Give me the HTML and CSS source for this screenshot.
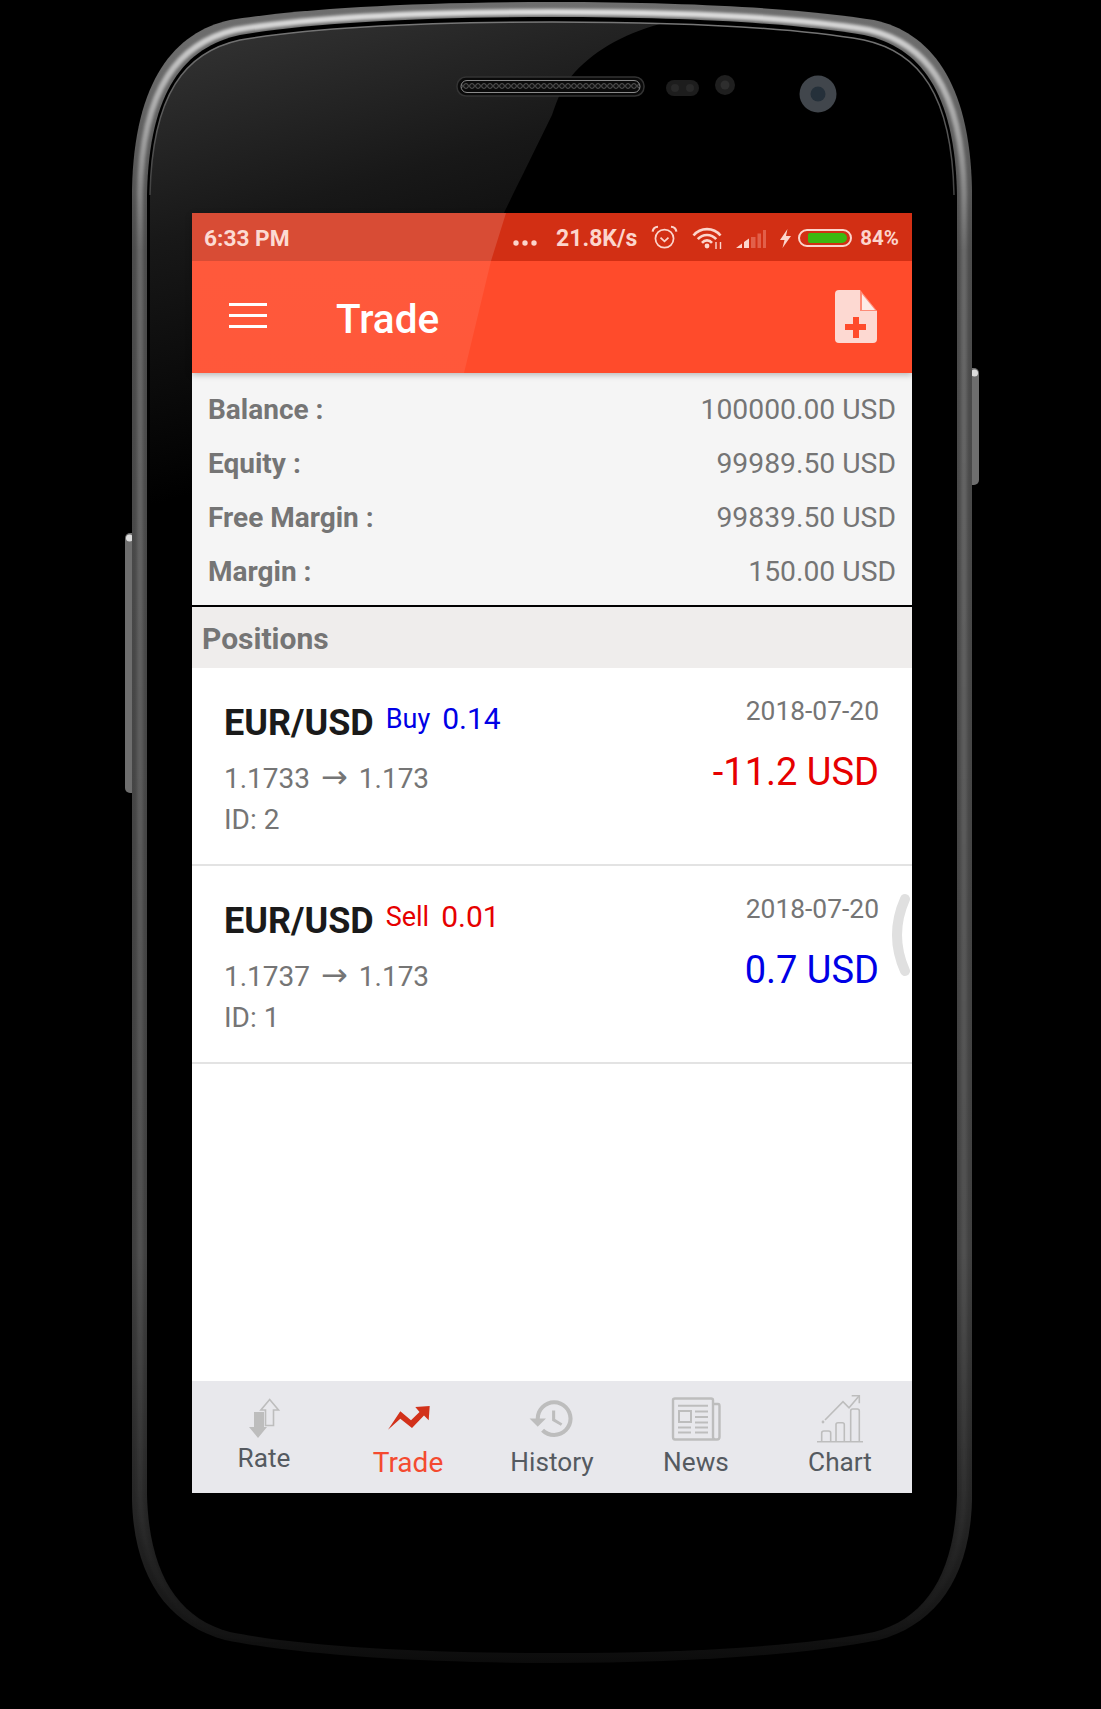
FILE: index.html
```html
<!DOCTYPE html>
<html lang="en">
<head>
  <meta charset="UTF-8" />
  <meta name="viewport" content="width=device-width, initial-scale=1.0"/>
  <title>Trade</title>
  <link rel="stylesheet" href="styles.css">
</head>
<body>
  <div class="phone">
    <!-- phone body, everything here sits behind the screen -->
    <svg class="frame" width="1101" height="1709" viewBox="0 0 1101 1709">
      <defs>
        <linearGradient id="band" gradientUnits="userSpaceOnUse" x1="0" y1="0" x2="0" y2="1670">
          <stop offset="0" stop-color="#6e6e6e"/>
          <stop offset="0.04" stop-color="#6a6a6a"/>
          <stop offset="0.15" stop-color="#4c4c4c"/>
          <stop offset="0.75" stop-color="#404040"/>
          <stop offset="0.91" stop-color="#242424"/>
          <stop offset="0.97" stop-color="#161616"/>
          <stop offset="1" stop-color="#0a0a0a"/>
        </linearGradient>
        <linearGradient id="sheen" gradientUnits="userSpaceOnUse" x1="0" y1="5" x2="0" y2="1650">
          <stop offset="0" stop-color="#fff" stop-opacity="0.8"/>
          <stop offset="0.04" stop-color="#fff" stop-opacity="0.55"/>
          <stop offset="0.15" stop-color="#fff" stop-opacity="0.16"/>
          <stop offset="0.8" stop-color="#fff" stop-opacity="0.08"/>
          <stop offset="1" stop-color="#fff" stop-opacity="0"/>
        </linearGradient>
        <linearGradient id="shine" gradientUnits="userSpaceOnUse" x1="200" y1="20" x2="330" y2="480">
          <stop offset="0" stop-color="#343434"/>
          <stop offset="0.42" stop-color="#181818"/>
          <stop offset="0.95" stop-color="#000"/>
        </linearGradient>
        <linearGradient id="lip" gradientUnits="userSpaceOnUse" x1="0" y1="20" x2="0" y2="300">
          <stop offset="0" stop-color="#777"/>
          <stop offset="1" stop-color="#222"/>
        </linearGradient>
        <pattern id="holes" patternUnits="userSpaceOnUse" x="463" y="81" width="6" height="11">
          <circle cx="3" cy="5" r="2.4" fill="#111" stroke="#6a6a6a" stroke-width="0.8"/>
        </pattern>
        <clipPath id="glass">
          <path d="M552 22 C420 22 310 28 240 40 C185 52 152 94 150 195 L150 1490 C153 1565 183 1609 232 1624 C305 1639 425 1647 552 1647 C679 1647 799 1639 872 1624 C921 1609 951 1565 954 1490 L954 195 C952 94 919 52 864 40 C794 28 684 22 552 22 Z"/>
        </clipPath>
        <filter id="soft" x="-5%" y="-5%" width="110%" height="110%">
          <feGaussianBlur stdDeviation="1.6"/>
        </filter>
      </defs>
      <rect x="125" y="533" width="12" height="260" rx="5" fill="#6e6e6e"/>
      <rect x="967" y="368" width="12" height="117" rx="5" fill="#6e6e6e"/>
      <circle cx="129.5" cy="538" r="3.5" fill="#ddd"/>
      <circle cx="974.5" cy="373" r="3.5" fill="#ddd"/>
      <path fill="url(#band)" d="M552 2 C400 2 290 10 230 20 C175 32 134 80 132 190 L132 1500 C134 1580 170 1625 225 1640 C300 1655 420 1663 552 1663 C684 1663 804 1655 879 1640 C934 1625 970 1580 972 1500 L972 190 C970 80 929 32 874 20 C814 10 704 2 552 2 Z"/>
      <path fill="none" stroke="url(#sheen)" stroke-width="6" filter="url(#soft)" d="M552 12 C410 12 300 19 235 30 C180 43 142 86 140 193 L140 1495 C142 1572 175 1620 228 1635 C302 1650 422 1658 552 1658 C682 1658 802 1650 876 1635 C929 1620 962 1572 964 1495 L964 193 C962 86 924 43 869 30 C804 19 694 12 552 12 Z"/>
      <path fill="#000" d="M552 17 C420 17 310 23 240 35 C185 47 149 90 147 195 L147 1495 C149 1572 177 1618 230 1632 C305 1647 425 1653 552 1653 C679 1653 799 1647 874 1632 C927 1618 955 1572 957 1495 L957 195 C955 90 919 47 864 35 C794 23 684 17 552 17 Z"/>
      <g clip-path="url(#glass)">
        <path fill="url(#shine)" d="M100 0 L690 18 C640 25 600 45 575 72 C562 86 558 98 552 115 C535 150 515 190 504 213 L192 213 L192 520 L100 520 Z"/>
      </g>
      <path fill="none" stroke="url(#lip)" stroke-width="1.5" d="M150 195 C152 94 185 52 240 40 C310 28 420 22 552 22 C684 22 794 28 864 40 C919 52 952 94 954 195"/>
      <rect x="457" y="77" width="187" height="19" rx="9" fill="#0a0a0a" stroke="#333" stroke-width="1.5"/>
      <rect x="461" y="80.5" width="179" height="12" rx="6" fill="url(#holes)" stroke="#8a8a8a" stroke-width="1"/>
      <rect x="666" y="80" width="33" height="16" rx="8" fill="#1d1d1d"/>
      <circle cx="675" cy="88" r="4" fill="#292929"/>
      <circle cx="690" cy="88" r="4" fill="#292929"/>
      <circle cx="725" cy="85" r="10" fill="#1f1f1f"/>
      <circle cx="725" cy="85" r="4.5" fill="#2e2e2e"/>
      <circle cx="818" cy="94" r="18.5" fill="#41464c"/>
      <circle cx="818" cy="94" r="7.5" fill="#25303a"/>
    </svg>

    <div class="screen">
      <div class="top">
        <div class="status">
          <span class="clock">6:33 PM</span>
          <div class="status-right">
            <svg class="st-dots" width="24" height="6" viewBox="0 0 24 6"><circle cx="3" cy="3" r="2.7"/><circle cx="12" cy="3" r="2.7"/><circle cx="21" cy="3" r="2.7"/></svg>
            <span class="speed">21.8K/s</span>
            <svg class="st-alarm" width="27" height="24" viewBox="0 0 25 22" fill="none" stroke="#fcd5cc" stroke-width="1.6">
              <circle cx="12.5" cy="12.5" r="8.4"/>
              <path d="M8.8 11.5 L12.5 15 L16.2 11.5"/>
              <path d="M1.5 6 C2 3 4 1.6 6.5 1.5 M23.5 6 C23 3 21 1.6 18.5 1.5" stroke-width="2"/>
            </svg>
            <svg class="st-wifi" width="31" height="22" viewBox="0 0 31 22" fill="none" stroke="#fcd5cc" stroke-width="2.6">
              <path d="M1.5 8.5 C8.5 0 21.5 0 28.5 8.5"/>
              <path d="M5.8 12.2 C10.5 6.5 19.5 6.5 24.2 12.2"/>
              <path d="M10 15.8 C12.8 12.6 17.2 12.6 20 15.8"/>
              <circle cx="15" cy="19" r="2.4" fill="#fcd5cc" stroke="none"/>
              <path d="M24 22 V15 M28.5 22 V15" stroke-width="1.4"/>
            </svg>
            <svg class="st-signal" width="30" height="19" viewBox="0 0 30 19">
              <path fill="#fcd5cc" d="M0 19 L6 14.5 V19 Z M8 13 L13 9.5 V19 H8 Z"/>
              <path fill="#e2604a" d="M15 8 H19.5 V19 H15 Z M21.5 4.5 H25 V19 H21.5 Z M27 1 H30 V19 H27 Z"/>
            </svg>
            <svg class="st-bolt" width="13" height="19" viewBox="0 0 13 19"><path fill="#fcd5cc" d="M8.5 0 L1 11 H5.5 L3.5 19 L12 7 H7 Z"/></svg>
            <div class="battery"><div class="battery-fill"></div></div>
            <span class="percent">84%</span>
          </div>
        </div>
        <div class="appbar">
          <div class="burger"><span></span><span></span><span></span></div>
          <div class="appbar-title">Trade</div>
          <svg class="file-add" width="42" height="53" viewBox="0 0 42 53">
            <path fill="#fdd9d2" d="M4 0 H25 L42 21 V49 Q42 53 38 53 H4 Q0 53 0 49 V4 Q0 0 4 0 Z"/>
            <path fill="#ff4b2b" d="M25 0 L42 21 H25 Z" opacity="0.55"/>
            <path fill="#fdece8" d="M27 4 L40 20 H27 Z"/>
            <path fill="#ff4b2b" d="M18 27 H24 V34 H31 V40 H24 V48 H18 V40 H10 V34 H18 Z"/>
          </svg>
        </div>
      </div>

      <div class="account">
        <div class="account-row"><span class="account-label">Balance :</span><span>100000.00 USD</span></div>
        <div class="account-row"><span class="account-label">Equity :</span><span>99989.50 USD</span></div>
        <div class="account-row"><span class="account-label">Free Margin :</span><span>99839.50 USD</span></div>
        <div class="account-row"><span class="account-label">Margin :</span><span>150.00 USD</span></div>
      </div>

      <div class="section-head">Positions</div>

      <div class="positions">
        <div class="position">
          <div class="pos-left">
            <div class="pos-title">
              <span class="pair">EUR/USD</span>
              <span class="side blue">Buy</span>
              <span class="lots blue">0.14</span>
            </div>
            <div class="pos-price">1.1733 <span class="arrow">→</span> 1.173</div>
            <div class="pos-id">ID: 2</div>
          </div>
          <div class="pos-right">
            <div class="pos-date">2018-07-20</div>
            <div class="pos-profit red">-11.2 USD</div>
          </div>
        </div>
        <div class="position">
          <div class="pos-left">
            <div class="pos-title">
              <span class="pair">EUR/USD</span>
              <span class="side red">Sell</span>
              <span class="lots red">0.01</span>
            </div>
            <div class="pos-price">1.1737 <span class="arrow">→</span> 1.173</div>
            <div class="pos-id">ID: 1</div>
          </div>
          <div class="pos-right">
            <div class="pos-date">2018-07-20</div>
            <div class="pos-profit blue">0.7 USD</div>
          </div>
        </div>
        <svg class="edge-handle" width="24" height="84" viewBox="0 0 24 84">
          <path d="M18 6 Q2 42 18 78" fill="none" stroke="#e0e0e0" stroke-width="10" stroke-linecap="round"/>
        </svg>
      </div>

      <div class="tabs">
        <div class="tab tab-short">
          <svg class="tab-icon" width="60" height="45" viewBox="0 0 60 45">
            <path fill="#bdbdbd" d="M20 18 H30 V33 H33 L24 44 L15 33 H20 Z"/>
            <path fill="none" stroke="#bdbdbd" stroke-width="1.6" d="M35.7 5.5 L44.5 16 H39.5 V31.5 H31.5 V16 H26.9 Z"/>
          </svg>
          <div class="tab-label">Rate</div>
        </div>
        <div class="tab tab-on">
          <svg class="tab-icon" width="60" height="50" viewBox="0 0 60 50">
            <path fill="#d2311a" transform="translate(10 12)" d="M0 23.7 L12.3 5.3 L23 14.3 L31.5 6 L27.3 1 L41.7 0 L40.7 14.3 L36 9.5 L24 22 L12.3 12.7 Z"/>
          </svg>
          <div class="tab-label">Trade</div>
        </div>
        <div class="tab">
          <svg class="tab-icon" width="60" height="50" viewBox="0 0 60 50">
            <path fill="#bdbdbd" transform="translate(5.5 0) scale(2.05)" d="M13 3c-4.97 0-9 4.03-9 9H1l3.89 3.89.07.14L9 12H6c0-3.87 3.13-7 7-7s7 3.13 7 7-3.13 7-7 7c-1.93 0-3.68-.79-4.94-2.06l-1.42 1.42C8.27 19.99 10.51 21 13 21c4.97 0 9-4.03 9-9s-4.03-9-9-9zm-1 5v5l4.28 2.54.72-1.21-3.5-2.08V8H12z"/>
          </svg>
          <div class="tab-label">History</div>
        </div>
        <div class="tab">
          <svg class="tab-icon" width="60" height="50" viewBox="0 0 60 50" fill="none" stroke="#bdbdbd">
            <path stroke-width="2.4" d="M47 10 H52 Q53.5 10 53.5 12 V43 Q53.5 45.5 51 45.5 H9 Q7 45.5 7 43 V6 Q7 4.5 9 4.5 H45 Q47 4.5 47 6 V43 Q47 45.5 49.5 45.5"/>
            <path stroke-width="2" d="M12 11.7 H42 M29 17.5 H42 M29 23 H42 M29 28.5 H42 M12 33.6 H25 M29 33.6 H42 M12 38.6 H25 M29 38.6 H42"/>
            <rect x="13" y="17" width="12" height="11" stroke-width="2"/>
          </svg>
          <div class="tab-label">News</div>
        </div>
        <div class="tab">
          <svg class="tab-icon" width="60" height="50" viewBox="0 0 60 50" fill="none" stroke="#bdbdbd" stroke-width="1.6">
            <path d="M7 47.8 H53"/>
            <path d="M11.7 47.8 V39 Q11.7 37 14 37 H18.5 Q20.7 37 20.7 39 V47.8"/>
            <path d="M26 47.8 V30.5 Q26 28.7 28 28.7 H32.3 Q34.3 28.7 34.3 30.5 V47.8"/>
            <path d="M40.7 47.8 V17 Q40.7 15 42.7 15 H47.3 Q49.3 15 49.3 17 V47.8"/>
            <path d="M15 26 L33 7.7 L39 13.7 L49 2"/>
            <path d="M41.7 1.7 H49.3 V9.3"/>
            <circle cx="13" cy="28" r="0.6"/>
          </svg>
          <div class="tab-label">Chart</div>
        </div>
      </div>
    </div>
  </div>
</body>
</html>
```

FILE: styles.css
```css
body {
  margin: 0;
  background: #000;
  font-family: Roboto, "Liberation Sans", sans-serif;
}
.phone {
  position: relative;
  width: 1101px;
  height: 1709px;
  padding: 213px 0 0 192px;
  box-sizing: border-box;
  overflow: hidden;
}
.frame {
  position: absolute;
  top: 0;
  left: 0;
}
.screen {
  position: relative;
  width: 720px;
  height: 1280px;
  display: flex;
  flex-direction: column;
  background: #fff;
}

/* status + app bar, the glass reflection lies over both */
.top {
  position: relative;
  z-index: 1;
  box-shadow: 0 2px 6px rgba(0,0,0,0.25);
}
.top::after {
  content: "";
  position: absolute;
  top: 0;
  left: 0;
  width: 100%;
  height: 100%;
  background: linear-gradient(180deg, rgba(255,255,255,0.14) 30%, rgba(255,255,255,0.08) 30%, rgba(255,255,255,0.07));
  clip-path: polygon(0 0, 314px 0, 299px 48px, 272px 160px, 0 160px);
  pointer-events: none;
}
.status {
  height: 48px;
  padding: 2px 13px 0 12px;
  box-sizing: border-box;
  display: flex;
  align-items: center;
  justify-content: space-between;
  background: #d22f14;
  color: #fcd5cc;
  font-weight: 700;
}
.clock {
  font-size: 22.7px;
}
.status-right {
  display: flex;
  align-items: center;
}
.st-dots {
  fill: #fcd5cc;
  margin: 10px 19px 0 0;
}
.speed {
  font-size: 23px;
  margin-right: 14px;
}
.st-alarm {
  margin: -3px 14px 0 0;
}
.st-wifi {
  margin: -1px 13px 0 0;
}
.st-signal {
  margin-right: 13px;
}
.st-bolt {
  margin-right: 6px;
}
.battery {
  width: 54px;
  height: 18px;
  box-sizing: border-box;
  border: 2px solid #fcd5cc;
  border-radius: 9px;
  padding: 2px 3px 2px 8px;
  margin-right: 8px;
}
.battery-fill {
  height: 100%;
  background: #3cb810;
  border-radius: 2px 5px 5px 2px;
}
.percent {
  font-size: 20.5px;
}
.appbar {
  height: 112px;
  padding: 0 35px 0 37px;
  display: flex;
  align-items: center;
  background: #ff4b2b;
  color: #fff;
}
.burger {
  width: 38px;
  display: flex;
  flex-direction: column;
  gap: 7.5px;
  margin-top: -3px;
}
.burger span {
  height: 3.5px;
  background: #fff;
}
.appbar-title {
  flex: 1;
  font-size: 40.5px;
  font-weight: 500;
  margin-left: 69px;
  padding-top: 4px;
}
.file-add {
  margin-top: -2px;
}

.account {
  height: 234px;
  box-sizing: border-box;
  padding: 9px 16px 0 16px;
  background: #f5f5f5;
  border-bottom: 2px solid #000;
  color: #757575;
  font-size: 28.3px;
}
.account-row {
  height: 54px;
  display: flex;
  align-items: center;
  justify-content: space-between;
}
.account-label {
  font-size: 28px;
  font-weight: 700;
}
.section-head {
  height: 61px;
  box-sizing: border-box;
  padding: 2px 0 0 10px;
  line-height: 59px;
  background: #efedec;
  color: #757575;
  font-size: 30px;
  font-weight: 700;
}

.positions {
  position: relative;
  flex: 1;
  background: #fff;
}
.position {
  height: 198px;
  box-sizing: border-box;
  padding: 28px 33px 0 32px;
  border-bottom: 2px solid #e3e3e3;
  display: flex;
  justify-content: space-between;
}
.pos-left {
  padding-top: 7px;
  color: #757575;
  font-size: 28px;
}
.pos-title {
  display: flex;
  align-items: flex-start;
  height: 40px;
}
.pair {
  font-size: 36px;
  line-height: 40px;
  font-weight: 700;
  color: #1a1a1a;
  margin-right: 12px;
}
.side {
  font-size: 27px;
  line-height: 32px;
  margin-right: 12px;
}
.lots {
  font-size: 30px;
  line-height: 32px;
}
.pos-price {
  line-height: 40px;
  margin-top: 16px;
}
.arrow {
  font-family: "DejaVu Sans", sans-serif;
  font-size: 32px;
  line-height: 1;
  margin: 0 4px;
}
.pos-id {
  line-height: 40px;
  margin-top: 1px;
}
.pos-right {
  text-align: right;
}
.pos-date {
  font-size: 26.4px;
  line-height: 30px;
  color: #757575;
}
.pos-profit {
  font-size: 38px;
  line-height: 50px;
  margin-top: 21px;
}
.blue {
  color: #0000e6;
}
.red {
  color: #e60000;
}
.edge-handle {
  position: absolute;
  top: 225px;
  right: 1px;
}

.tabs {
  height: 112px;
  box-sizing: border-box;
  padding-top: 13px;
  display: flex;
  background: #e8e8ec;
}
.tab {
  flex: 1;
  display: flex;
  flex-direction: column;
  align-items: center;
  color: #555a60;
}
.tab-icon {
  display: block;
}
.tab-label {
  font-size: 26.2px;
  line-height: 30px;
  margin-top: 3px;
}
.tab-short .tab-label {
  margin-top: 4px;
}
.tab-on {
  color: #f44a30;
}
.tab-on .tab-label {
  font-size: 28px;
  margin-top: 4px;
}
```
